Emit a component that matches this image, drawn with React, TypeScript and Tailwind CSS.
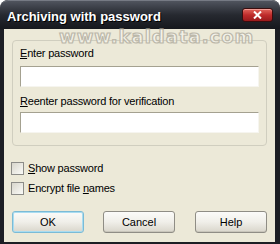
import React from "react";

function Checkbox({ children }: { children: React.ReactNode }) {
  return (
    <div className="flex items-center h-[13px]">
      <div className="w-[13px] h-[13px] border border-[#8c8c88] bg-gradient-to-br from-[#d8d6cc] to-[#fbfbf8] shrink-0" />
      <span className="ml-[4px] text-[11px] leading-[13px] text-black tracking-[-0.2px]">{children}</span>
    </div>
  );
}

function Btn({ children, def, className }: { children: React.ReactNode; def?: boolean; className?: string }) {
  return (
    <div
      className={
        "w-[72px] h-[22px] rounded-[3px] border flex items-center justify-center text-[11px] text-black bg-gradient-to-b from-[#fbfbf9] via-[#f0efe9] to-[#d9d6cb] " +
        (def
          ? "border-[#7bbbd6] shadow-[inset_0_0_0_1px_#a9dcf0] "
          : "border-[#8f8d85] shadow-[inset_0_-1px_0_#c9c6bb] ") +
        (className ?? "")
      }
    >
      {children}
    </div>
  );
}

export default function App() {
  return (
    <div
      className="w-[280px] h-[244px] bg-[#1c1e24] rounded-t-[8px] flex flex-col overflow-hidden relative"
      style={{ fontFamily: '"Liberation Sans", Arial, sans-serif' }}
    >
      <div className="h-[29px] shrink-0 flex items-start justify-between bg-gradient-to-b from-[#50545e] via-[#262930] to-[#16181d] px-[7px] rounded-t-[8px] border-t border-[#767a84]">
        <span className="mt-[8px] text-white font-bold text-[13px] leading-[15px] [text-shadow:1px_1px_0_#000]">
          Archiving with password
        </span>
        <div className="mt-[7px] w-[31px] h-[14px] rounded-[3px] border border-[#3a0d0e] bg-gradient-to-b from-[#e2645c] via-[#bf2b2b] to-[#9a1a1c] flex items-center justify-center shadow-[inset_0_1px_0_#f29a92]">
          <svg width="9" height="8" viewBox="0 0 9 8">
            <path d="M1 0.5 L8 7.5 M8 0.5 L1 7.5" stroke="#ffffff" strokeWidth="2" />
          </svg>
        </div>
      </div>

      <div className="flex-1 ml-[4px] mr-[5px] mb-[2px] bg-[#ece9d8] flex flex-col">
        <div className="mt-[11px] mx-[8px] h-[106px] border border-[#d0cebf] rounded-[4px] px-[7px] pt-[6px] flex flex-col text-[11px] leading-[13px] text-black tracking-[-0.2px]">
          <span>
            <span className="underline underline-offset-1">E</span>nter password
          </span>
          <div className="mt-[6px] h-[21px] bg-white border border-t-[#a4a190] border-l-[#a4a190] border-b-[#f6f5ef] border-r-[#f6f5ef]" />
          <span className="mt-[8px]">
            <span className="underline underline-offset-1">R</span>eenter password for verification
          </span>
          <div className="mt-[4px] h-[21px] bg-white border border-t-[#a4a190] border-l-[#a4a190] border-b-[#f6f5ef] border-r-[#f6f5ef]" />
        </div>

        <div className="mt-[16px] ml-[7px] flex flex-col gap-[7px]">
          <Checkbox>
            <span className="underline underline-offset-1">S</span>how password
          </Checkbox>
          <Checkbox>
            Encrypt file <span className="underline underline-offset-1">n</span>ames
          </Checkbox>
        </div>

        <div className="mt-[16px] ml-[8px] flex">
          <Btn def>OK</Btn>
          <Btn className="ml-[19px]">Cancel</Btn>
          <Btn className="ml-[20px]">Help</Btn>
        </div>
      </div>

      <div
        className="absolute left-[59px] top-[27px] text-[18px] font-bold tracking-[1px] leading-[20px] text-[rgba(250,249,244,0.6)] [-webkit-text-stroke:1.2px_#bcb8aa] pointer-events-none select-none"
        style={{ fontFamily: '"DejaVu Sans", sans-serif' }}
      >
        www.kaldata.com
      </div>
    </div>
  );
}
